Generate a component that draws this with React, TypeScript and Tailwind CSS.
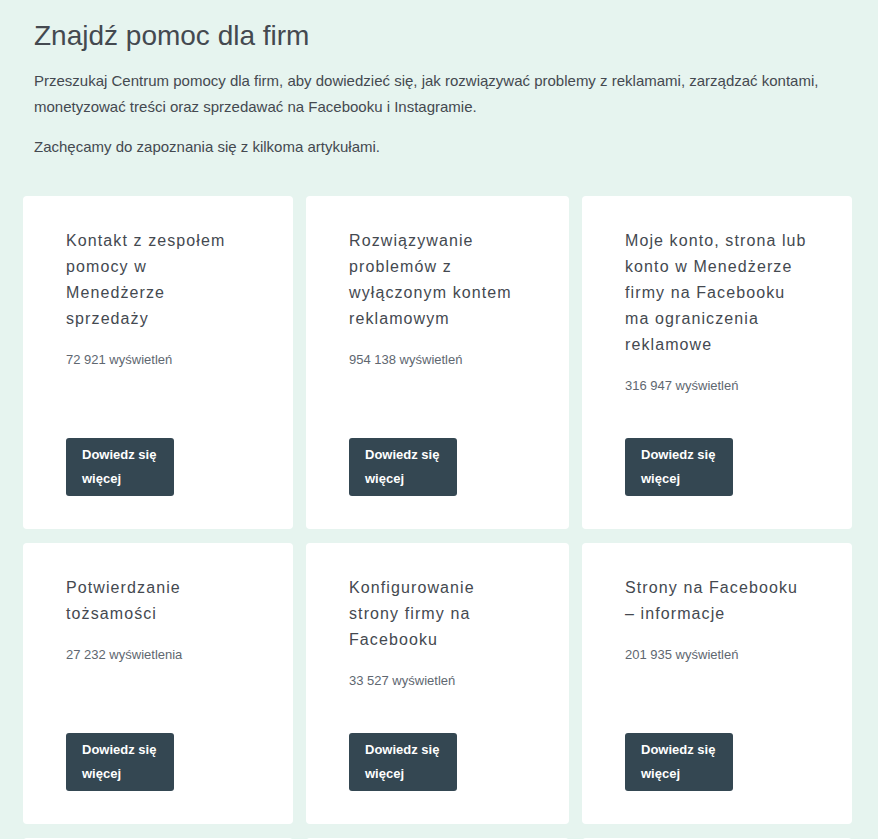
type Article = {
  title: string;
  views: string;
};

const articles: Article[] = [
  { title: "Kontakt z zespołem pomocy w Menedżerze sprzedaży", views: "72 921 wyświetleń" },
  { title: "Rozwiązywanie problemów z wyłączonym kontem reklamowym", views: "954 138 wyświetleń" },
  {
    title: "Moje konto, strona lub konto w Menedżerze firmy na Facebooku ma ograniczenia reklamowe",
    views: "316 947 wyświetleń",
  },
  { title: "Potwierdzanie tożsamości", views: "27 232 wyświetlenia" },
  { title: "Konfigurowanie strony firmy na Facebooku", views: "33 527 wyświetleń" },
  { title: "Strony na Facebooku – informacje", views: "201 935 wyświetleń" },
  { title: "Tworzenie reklamy w Menedżerze reklam", views: "118 402 wyświetlenia" },
  { title: "Płatności za reklamy na Facebooku", views: "86 310 wyświetleń" },
  { title: "Zarządzanie uprawnieniami w Business Suite", views: "54 776 wyświetleń" },
];

function ArticleCard({ article }: { article: Article }) {
  return (
    <div className="flex flex-col rounded bg-white pl-[43px] pr-[45px] pt-8 pb-[33px]">
      <h3 className="text-[16px] leading-[26px] tracking-[1.1px] text-[#444950]">{article.title}</h3>
      <p className="mt-[18px] mb-[42px] text-[13px] leading-5 text-[#606770]">{article.views}</p>
      <a
        href="#"
        className="mt-auto block w-[108px] rounded-[3px] bg-[#344752] px-4 py-[5px] text-[13px] font-bold leading-6 text-white"
      >
        Dowiedz się więcej
      </a>
    </div>
  );
}

export default function App() {
  return (
    <div className="min-h-screen bg-[#e6f4ef] font-['Liberation_Sans',Arial,sans-serif]">
      <header className="px-[34px] pt-[18px]">
        <h1 className="text-[28px] leading-9 text-[#444950]">Znajdź pomoc dla firm</h1>
        <p className="mt-[14px] text-[15px] leading-[26px] text-[#444950]">
          Przeszukaj Centrum pomocy dla firm, aby dowiedzieć się, jak rozwiązywać problemy z reklamami, zarządzać
          kontami, monetyzować treści oraz sprzedawać na Facebooku i Instagramie.
        </p>
        <p className="mt-[14px] text-[15px] leading-[26px] text-[#444950]">
          Zachęcamy do zapoznania się z kilkoma artykułami.
        </p>
      </header>

      <section className="mt-9 grid grid-cols-[270px_263px_270px] gap-x-[13px] gap-y-[14px] pl-[23px] pb-8">
        {articles.map((a) => (
          <ArticleCard key={a.title} article={a} />
        ))}
      </section>
    </div>
  );
}
